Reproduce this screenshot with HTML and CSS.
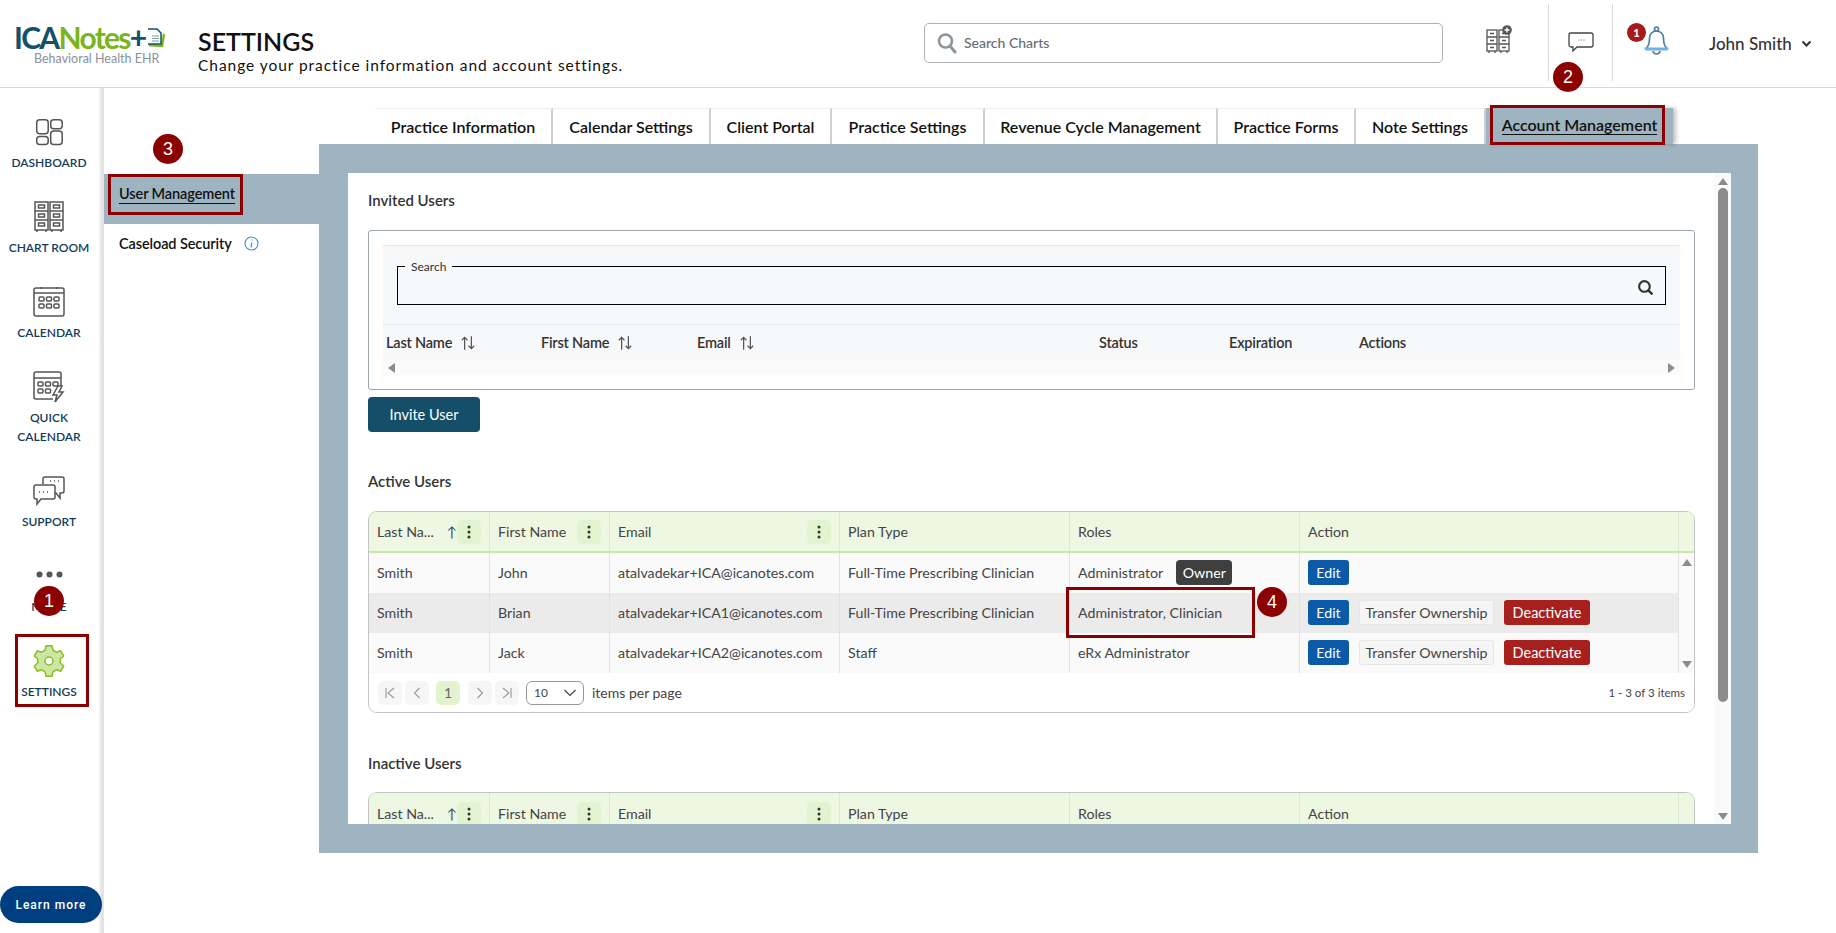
FILE: index.html
```html
<!DOCTYPE html>
<html lang="en">
<head>
<meta charset="utf-8">
<title>Settings</title>
<link rel="stylesheet" href="styles.css">
</head>
<body>
<div class="page">
  <header class="topbar">
    <div class="logo">
      <div class="logo-main"><span class="logo-ica">ICA</span><span class="logo-notes">Notes</span><span class="logo-ica">+</span>
        <svg class="logo-doc" width="19" height="19" viewBox="0 0 19 19"><path d="M3 17 L16 18 L18 6" fill="none" stroke="#7ab51d" stroke-width="2.400"/><path d="M2 1h9l4 4v11H2" fill="#fff" stroke="#14506a" stroke-width="1.500"/><path d="M6 8h7M6 10.500h7M6 13h7" stroke="#7d9aa8"/></svg>
      </div>
      <div class="logo-sub">Behavioral Health EHR</div>
    </div>
    <div class="page-title">
      <h1>SETTINGS</h1>
      <p>Change your practice information and account settings.</p>
    </div>
    <div class="charts-search">
      <svg width="20" height="22" viewBox="0 0 20 22"><circle cx="8.500" cy="9" r="6.500" fill="none" stroke="#8d949a" stroke-width="2.600"/><path d="M13 14l5 6" stroke="#8d949a" stroke-width="3" stroke-linecap="round"/></svg>
      <span>Search Charts</span>
    </div>
    <div class="top-icon chart-add">
      <svg width="27" height="29" viewBox="0 0 27 29"><g fill="none" stroke="#555" stroke-width="1.300"><rect x="1" y="5" width="10" height="21"/><rect x="13" y="5" width="10" height="21"/><path d="M1 12h10M1 19h10M13 12h10M13 19h10M4 8.500h4M4 15.500h4M4 22.500h4M16 8.500h4M16 15.500h4M16 22.500h4M3 26v2M9 26v2M15 26v2M21 26v2"/></g><circle cx="21" cy="5" r="4.800" fill="#555"/><path d="M18.500 5h5M21 2.500v5" stroke="#fff" stroke-width="1.300"/></svg>
    </div>
    <div class="top-icon chat">
      <svg width="26" height="21" viewBox="0 0 26 21"><path d="M3 1h20a2 2 0 0 1 2 2v10a2 2 0 0 1-2 2H9l-4 4v-4H3a2 2 0 0 1-2-2V3a2 2 0 0 1 2-2z" fill="#fff" stroke="#444" stroke-width="1.300"/><path d="M10.500 8h1M13 8h1M15.500 8h1" stroke="#666"/></svg>
    </div>
    <div class="top-icon bell">
      <svg width="29" height="29" viewBox="0 0 28 29"><g fill="none" stroke="#4d80a3" stroke-width="1.700"><path d="M4 22c3-3 3-6 3-10 0-4 3-7 7-7s7 3 7 7c0 4 0 7 3 10"/><circle cx="14" cy="3" r="2"/><path d="M10.500 25a3.500 3 0 0 0 7 0"/></g><path d="M1.500 21.500h25l-1.500 3H3z" fill="#6fb3e4"/></svg>
      <span class="bell-count">1</span>
    </div>
    <div class="user">John Smith
      <svg width="11" height="8" viewBox="0 0 11 8"><path d="M1.500 1.500l4 4 4-4" fill="none" stroke="#333" stroke-width="2"/></svg>
    </div>
  </header>

  <div class="body-row">
    <nav class="sidebar">
      <a class="nav-item">
        <svg class="nav-icon" width="32" height="32" viewBox="0 0 32 32"><g fill="none" stroke="#555" stroke-width="1.500"><rect x="3.700" y="3.700" width="11.500" height="14" rx="3"/><rect x="3.700" y="20.500" width="11.500" height="8" rx="3"/><rect x="17.700" y="3.700" width="11.500" height="9" rx="3"/><rect x="17.700" y="15" width="11.500" height="13.500" rx="3"/></g></svg>
        <span>DASHBOARD</span>
      </a>
      <a class="nav-item">
        <svg class="nav-icon" width="32" height="32" viewBox="0 0 32 32"><g fill="none" stroke="#555" stroke-width="1.500"><rect x="2" y="1" width="13" height="28"/><rect x="17" y="1" width="13" height="28"/><path d="M2 10h13M2 19h13M17 10h13M17 19h13M5.500 4h6v3h-6zM5.500 13h6v3h-6zM5.500 22h6v3h-6zM20.500 4h6v3h-6zM20.500 13h6v3h-6zM20.500 22h6v3h-6zM4 29v2M13 29v2M19 29v2M28 29v2"/></g></svg>
        <span>CHART ROOM</span>
      </a>
      <a class="nav-item">
        <svg class="nav-icon" width="32" height="32" viewBox="0 0 32 32"><g fill="none" stroke="#555" stroke-width="1.500"><rect x="1" y="2" width="30" height="28" rx="2"/><path d="M1 7h30"/><path d="M8 1v2M24 1v2"/><rect x="6" y="11" width="5" height="4" rx="1"/><rect x="13.500" y="11" width="5" height="4" rx="1"/><rect x="21" y="11" width="5" height="4" rx="1"/><rect x="6" y="18" width="5" height="4" rx="1"/><rect x="13.500" y="18" width="5" height="4" rx="1"/><rect x="21" y="18" width="5" height="4" rx="1"/></g></svg>
        <span>CALENDAR</span>
      </a>
      <a class="nav-item">
        <svg class="nav-icon" width="32" height="32" viewBox="0 0 32 32"><g fill="none" stroke="#555" stroke-width="1.500"><path d="M20 28H3a2 2 0 0 1-2-2V3a2 2 0 0 1 2-2h23a2 2 0 0 1 2 2v12"/><path d="M1 7h27"/><rect x="5" y="11" width="5" height="4" rx="1"/><rect x="12.500" y="11" width="5" height="4" rx="1"/><rect x="20" y="11" width="5" height="4" rx="1"/><rect x="5" y="18" width="5" height="4" rx="1"/><rect x="12.500" y="18" width="5" height="4" rx="1"/><path d="M25 15l-5 9h4l-2 7 8-10h-4l3-6z" fill="#fff"/></g></svg>
        <span>QUICK<br>CALENDAR</span>
      </a>
      <a class="nav-item">
        <svg class="nav-icon" width="32" height="32" viewBox="0 0 32 32"><g fill="none" stroke="#555" stroke-width="1.500"><path d="M10 9V4a2 2 0 0 1 2-2h17a2 2 0 0 1 2 2v12a2 2 0 0 1-2 2h-2v5l-4-5h-2"/><path d="M3 10h17a2 2 0 0 1 2 2v10a2 2 0 0 1-2 2H8l-4 5v-5H3a2 2 0 0 1-2-2V12a2 2 0 0 1 2-2z" fill="#fff"/><path d="M6 17h1M10 17h1M14 17h1M17 6h1M21 6h1M25 6h1"/></g></svg>
        <span>SUPPORT</span>
      </a>
      <a class="nav-item">
        <svg class="nav-icon" width="32" height="32" viewBox="0 0 32 32"><g fill="#555"><circle cx="6.500" cy="14.500" r="3"/><circle cx="16.500" cy="14.500" r="3"/><circle cx="26.500" cy="14.500" r="3"/></g></svg>
        <span>MORE</span>
      </a>
      <a class="nav-item">
        <svg class="nav-icon" width="32" height="32" viewBox="0 0 32 32"><path d="M13.040 .78L18.960 .78L19.930 5.190L23.390 7.190L27.700 5.830L30.660 10.950L27.330 14L27.330 18L30.660 21.050L27.700 26.170L23.390 24.810L19.930 26.810L18.960 31.220L13.040 31.220L12.070 26.810L8.610 24.810L4.300 26.170L1.340 21.050L4.670 18L4.670 14L1.340 10.950L4.300 5.830L8.610 7.190L12.070 5.190Z" fill="#cde6a5" stroke="#8ac01e" stroke-width="1.500" stroke-linejoin="round"/><circle cx="16" cy="16" r="4" fill="#fff" stroke="#8ac01e" stroke-width="1.500"/></svg>
        <span>SETTINGS</span>
      </a>
      <button class="learn-more">Learn more</button>
    </nav>

    <aside class="subnav">
      <a class="subnav-item is-active"><span>User Management</span></a>
      <a class="subnav-item"><span class="plain">Caseload Security</span>
        <svg class="info" width="15" height="15" viewBox="0 0 15 15"><circle cx="7.500" cy="7.500" r="6.500" fill="none" stroke="#3b8ee0" stroke-width="1.100"/><path d="M8 3.500v1M7.800 6.500L7 11.500" stroke="#3b8ee0" stroke-width="1.200"/></svg>
      </a>
    </aside>

    <main class="content">
      <div class="tabs">
        <a class="tab tab-1">Practice Information</a>
        <a class="tab tab-2">Calendar Settings</a>
        <a class="tab tab-3">Client Portal</a>
        <a class="tab tab-4">Practice Settings</a>
        <a class="tab tab-5">Revenue Cycle Management</a>
        <a class="tab tab-6">Practice Forms</a>
        <a class="tab tab-7">Note Settings</a>
        <a class="tab tab-8 is-active"><span>Account Management</span></a>
      </div>
      <div class="panel">
        <div class="sheet">
          <div class="sheet-scroll">
            <h2 class="section-title first">Invited Users</h2>
            <section class="invite-box">
              <div class="invite-inner">
                <div class="invite-search">
                  <fieldset>
                    <legend>Search</legend>
                    <svg width="17" height="17" viewBox="0 0 16 16"><circle cx="7" cy="7" r="5" fill="none" stroke="#333" stroke-width="2"/><path d="M10.500 10.500l4 4" stroke="#333" stroke-width="2.200"/></svg>
                  </fieldset>
                </div>
                <div class="invite-head">
                  <div>Last Name <svg class="sort" width="18" height="18" viewBox="0 0 16 16"><path d="M5 14V3M2.500 5.500L5 3l2.500 2.500M11 2v11M8.500 10.500L11 13l2.500-2.500" fill="none" stroke="#555" stroke-width="1.100"/></svg></div>
                  <div>First Name <svg class="sort" width="18" height="18" viewBox="0 0 16 16"><path d="M5 14V3M2.500 5.500L5 3l2.500 2.500M11 2v11M8.500 10.500L11 13l2.500-2.500" fill="none" stroke="#555" stroke-width="1.100"/></svg></div>
                  <div>Email <svg class="sort" width="18" height="18" viewBox="0 0 16 16"><path d="M5 14V3M2.500 5.500L5 3l2.500 2.500M11 2v11M8.500 10.500L11 13l2.500-2.500" fill="none" stroke="#555" stroke-width="1.100"/></svg></div>
                  <div>Status</div>
                  <div>Expiration</div>
                  <div>Actions</div>
                </div>
                <div class="h-scroll"><i class="arrow-left"></i><i class="arrow-right"></i></div>
              </div>
            </section>
            <button class="btn-invite">Invite User</button>

            <h2 class="section-title active">Active Users</h2>
            <section class="data-table">
              <div class="row head">
                <div class="cell"><span class="clip">Last Na...</span><b class="up">↑</b><i class="menu"><svg width="4" height="14" viewBox="0 0 4 14"><circle cx="2" cy="2" r="1.500"/><circle cx="2" cy="7" r="1.500"/><circle cx="2" cy="12" r="1.500"/></svg></i></div>
                <div class="cell">First Name<i class="menu"><svg width="4" height="14" viewBox="0 0 4 14"><circle cx="2" cy="2" r="1.500"/><circle cx="2" cy="7" r="1.500"/><circle cx="2" cy="12" r="1.500"/></svg></i></div>
                <div class="cell">Email<i class="menu"><svg width="4" height="14" viewBox="0 0 4 14"><circle cx="2" cy="2" r="1.500"/><circle cx="2" cy="7" r="1.500"/><circle cx="2" cy="12" r="1.500"/></svg></i></div>
                <div class="cell">Plan Type</div>
                <div class="cell">Roles</div>
                <div class="cell">Action</div>
                <div class="cell end"></div>
              </div>
              <div class="row">
                <div class="cell">Smith</div>
                <div class="cell">John</div>
                <div class="cell">atalvadekar+ICA@icanotes.com</div>
                <div class="cell">Full-Time Prescribing Clinician</div>
                <div class="cell">Administrator<span class="owner">Owner</span></div>
                <div class="cell"><button class="btn-edit">Edit</button></div>
                <div class="cell gutter"><i class="arrow-up"></i></div>
              </div>
              <div class="row hover">
                <div class="cell">Smith</div>
                <div class="cell">Brian</div>
                <div class="cell">atalvadekar+ICA1@icanotes.com</div>
                <div class="cell">Full-Time Prescribing Clinician</div>
                <div class="cell">Administrator, Clinician</div>
                <div class="cell"><button class="btn-edit">Edit</button><button class="btn-transfer">Transfer Ownership</button><button class="btn-deactivate">Deactivate</button></div>
                <div class="cell gutter"></div>
              </div>
              <div class="row">
                <div class="cell">Smith</div>
                <div class="cell">Jack</div>
                <div class="cell">atalvadekar+ICA2@icanotes.com</div>
                <div class="cell">Staff</div>
                <div class="cell">eRx Administrator</div>
                <div class="cell"><button class="btn-edit">Edit</button><button class="btn-transfer">Transfer Ownership</button><button class="btn-deactivate">Deactivate</button></div>
                <div class="cell gutter"><i class="arrow-down"></i></div>
              </div>
              <div class="pager">
                <span class="pg"><svg width="12" height="12" viewBox="0 0 12 12"><path d="M2 1v10M10 1L4 6l6 5" fill="none" stroke="#999" stroke-width="1.100"/></svg></span>
                <span class="pg"><svg width="12" height="12" viewBox="0 0 12 12"><path d="M8.500 1L3.500 6l5 5" fill="none" stroke="#999" stroke-width="1.100"/></svg></span>
                <span class="pg current">1</span>
                <span class="pg"><svg width="12" height="12" viewBox="0 0 12 12"><path d="M3.500 1l5 5-5 5" fill="none" stroke="#999" stroke-width="1.100"/></svg></span>
                <span class="pg"><svg width="12" height="12" viewBox="0 0 12 12"><path d="M10 1v10M2 1l6 5-6 5" fill="none" stroke="#999" stroke-width="1.100"/></svg></span>
                <span class="page-size">10<svg width="14" height="8" viewBox="0 0 14 8"><path d="M1.500 1l5.500 5.500L12.500 1" fill="none" stroke="#444" stroke-width="1.200"/></svg></span>
                <span class="per-page">items per page</span>
                <span class="count">1 - 3 of 3 items</span>
              </div>
            </section>

            <h2 class="section-title inactive">Inactive Users</h2>
            <section class="data-table clipped">
              <div class="row head">
                <div class="cell"><span class="clip">Last Na...</span><b class="up">↑</b><i class="menu"><svg width="4" height="14" viewBox="0 0 4 14"><circle cx="2" cy="2" r="1.500"/><circle cx="2" cy="7" r="1.500"/><circle cx="2" cy="12" r="1.500"/></svg></i></div>
                <div class="cell">First Name<i class="menu"><svg width="4" height="14" viewBox="0 0 4 14"><circle cx="2" cy="2" r="1.500"/><circle cx="2" cy="7" r="1.500"/><circle cx="2" cy="12" r="1.500"/></svg></i></div>
                <div class="cell">Email<i class="menu"><svg width="4" height="14" viewBox="0 0 4 14"><circle cx="2" cy="2" r="1.500"/><circle cx="2" cy="7" r="1.500"/><circle cx="2" cy="12" r="1.500"/></svg></i></div>
                <div class="cell">Plan Type</div>
                <div class="cell">Roles</div>
                <div class="cell">Action</div>
                <div class="cell end"></div>
              </div>
            </section>
          </div>
          <div class="v-scroll">
            <i class="arrow-up"></i>
            <div class="thumb"></div>
            <i class="arrow-down"></i>
          </div>
        </div>
      </div>
    </main>
  </div>

  <div class="mark box-settings"></div>
  <div class="mark box-tab"></div>
  <div class="mark box-user"></div>
  <div class="mark box-role"></div>
  <div class="step step-1">1</div>
  <div class="step step-2">2</div>
  <div class="step step-3">3</div>
  <div class="step step-4">4</div>
</div>
</body>
</html>
```

FILE: styles.css
```css
* { box-sizing: border-box; }
html, body { margin: 0; padding: 0; background: #fff; }
body { font-family: "Lato", "Liberation Sans", sans-serif; color: #333; overflow: hidden; }
h1, h2, p { margin: 0; }
i { font-style: normal; }
button { font-family: inherit; cursor: pointer; }

.page { position: relative; width: 1836px; height: 933px; display: flex; flex-direction: column; }

/* Top bar */
.topbar { height: 88px; flex: none; display: flex; align-items: flex-start; border-bottom: 1px solid #d9d9d9; }
.logo { width: 198px; flex: none; padding: 24px 0 0 14px; }
.logo-main { display: flex; align-items: flex-start; height: 27px; font-size: 30px; line-height: 27px; font-weight: 700; letter-spacing: -1.700px; }
.logo-ica { color: #14506a; }
.logo-notes { color: #7ab51d; }
.logo-doc { margin: 4px 0 0 0; }
.logo-sub { margin: 0 0 0 20px; font-size: 12.500px; line-height: 16px; color: #87929a; }
.page-title { width: 726px; flex: none; padding-top: 26px; }
.page-title h1 { font-size: 25px; line-height: 30px; font-weight: 600; color: #111; }
.page-title p { font-size: 15.500px; line-height: 18px; letter-spacing: 0.95px; color: #111; }
.charts-search { width: 519px; height: 40px; flex: none; margin-top: 23px; display: flex; align-items: center; gap: 7px; padding: 0 0 1px 12px; border: 1px solid #a9b0b6; border-radius: 5px; font-size: 14px; font-weight: 500; color: #666e75; }
.top-icon { flex: none; display: flex; }
.chart-add { margin: 25px 0 0 43px; }
.chat { margin-top: 4px; margin-left: 35px; height: 77px; width: 65px; border-left: 1px solid #dcdcdc; border-right: 1px solid #dcdcdc; padding: 28px 0 0 19px; }
.bell { position: relative; margin: 26px 0 0 29px; }
.bell-count { position: absolute; left: -15px; top: -3px; width: 19px; height: 19px; border-radius: 50%; background: #a61c1c; color: #fff; font-size: 11px; font-weight: 900; line-height: 19px; text-align: center; }
.user { margin: 34px 0 0 38px; display: flex; align-items: center; gap: 9px; font-size: 17px; line-height: 20px; color: #333; font-weight: 500; white-space: nowrap; }

.body-row { flex: 1; display: flex; min-height: 0; }

/* Left nav */
.sidebar { width: 104px; flex: none; display: flex; flex-direction: column; align-items: center; gap: 29px; padding-top: 28px; background: linear-gradient(to right, #fff 98px, #e2e2e2 102px, #dcdcdc 103px, #eee 104px); }
.nav-item { display: flex; flex-direction: column; align-items: center; width: 98px; margin-right: 6px; text-align: center; font-size: 12px; line-height: 19px; font-weight: 600; color: #123d5a; }
.nav-icon { display: block; margin-bottom: 5px; }
.learn-more { margin: auto 2px 10px 0; width: 102px; height: 37px; flex: none; border: 0; border-radius: 19px; background: #003f7f; color: #fff; font-family: "Roboto", "Liberation Sans", sans-serif; font-size: 12px; font-weight: 500; letter-spacing: 1px; }

/* Sub nav */
.subnav { width: 215px; flex: none; padding-top: 86px; }
.subnav-item { display: flex; align-items: center; height: 40px; padding: 0 0 2px 15px; font-size: 14.500px; font-weight: 600; color: #111; letter-spacing: -0.1px; }
.subnav-item.is-active { height: 50px; padding-bottom: 10px; background: #9fb4c1; }
.subnav-item.is-active span { line-height: 18px; border-bottom: 1px solid #111; }
.info { margin-left: 12px; }

/* Tabs + panel */
.content { flex: none; width: 1439px; padding-top: 20px; }
.tabs { display: flex; height: 36px; margin-left: 56px; }
.tab { display: flex; align-items: center; justify-content: center; height: 36px; background: #fff; border-top: 1px solid #eee; border-right: 2px solid #d0d0d0; font-size: 16px; font-weight: 600; color: #111; white-space: nowrap; }
.tab-1 { width: 178px; }
.tab-2 { width: 158px; }
.tab-3 { width: 121px; }
.tab-4 { width: 153px; }
.tab-5 { width: 233px; }
.tab-6 { width: 138px; }
.tab-7 { width: 130px; }
.tab-8 { width: 187px; }
.tab.is-active { background: #9fb4c1; border: 0; box-shadow: 3px 0 4px rgba(0,0,0,.25); padding-bottom: 1px; }
.tab.is-active span { border-bottom: 1px solid #111; line-height: 18px; }
.panel { height: 709px; padding: 29px 27px 29px 29px; background: #9fb4c1; }
.sheet { height: 651px; display: flex; background: #fff; overflow: hidden; }
.sheet-scroll { width: 1366px; flex: none; padding-left: 20px; overflow: hidden; }
.v-scroll { position: relative; width: 17px; flex: none; background: #fafafa; display: flex; flex-direction: column; align-items: center; padding-top: 5px; }
.v-scroll .thumb { width: 10px; height: 514px; margin-top: 3px; border-radius: 5px; background: #8c8c8c; }
.v-scroll .arrow-down { margin-top: auto; margin-bottom: 4px; }
.arrow-up, .arrow-down, .arrow-left, .arrow-right { display: block; width: 0; height: 0; border-style: solid; border-color: transparent; }
.arrow-up { border-width: 0 5px 7px; border-bottom-color: #8c8c8c; }
.arrow-down { border-width: 7px 5px 0; border-top-color: #8c8c8c; }
.arrow-left { border-width: 5px 7px 5px 0; border-right-color: #8c8c8c; }
.arrow-right { border-width: 5px 0 5px 7px; border-left-color: #8c8c8c; }

.section-title { font-size: 15px; line-height: 20px; font-weight: 600; color: #333; }
.section-title.first { margin: 17px 0 20px; }
.section-title.active { margin: 39px 0 20px; }
.section-title.inactive { margin: 40px 0 19px; }

/* Invited users */
.invite-box { width: 1327px; height: 160px; padding: 14px; border: 1px solid #9aa5ad; border-radius: 3px; }
.invite-inner { background: #f7f8fa; border-top: 1px solid #e5e7eb; }
.invite-search { height: 79px; padding: 13px 14px 0; border-bottom: 1px solid #e5e7eb; }
.invite-search fieldset { height: 46px; margin: 0; padding: 0 11px 0 0; display: flex; justify-content: flex-end; border: 1px solid #000; position: relative; }
.invite-search legend { margin-left: 7px; padding: 0 6px; font-size: 12px; line-height: 14px; color: #333; transform: translateY(1px); }
.invite-search fieldset svg { display: block; margin-top: 6px; }
.invite-head { display: grid; grid-template-columns: 155px 156px 402px 130px 130px 1fr; align-items: center; height: 35px; padding-left: 3px; font-size: 14.500px; font-weight: 600; color: #333; letter-spacing: -0.2px; }
.invite-head > div { display: flex; align-items: center; }
.sort { margin-left: 7px; }
.h-scroll { display: flex; align-items: center; justify-content: space-between; height: 15px; padding: 0 5px; background: #fbfbfb; }

.btn-invite { display: block; width: 112px; height: 35px; margin-top: 7px; border: 0; border-radius: 4px; background: #154e68; color: #fff; font-size: 14.500px; }

/* Data tables */
.data-table { width: 1327px; border: 1px solid #c4c4c4; border-radius: 9px; overflow: hidden; background: #fff; font-size: 14.200px; color: #444; }
.row { display: grid; grid-template-columns: 121px 120px 230px 230px 230px 379px 15px; height: 40px; background: #fafafa; }
.row.head { height: 41px; background: #edf7e2; border-bottom: 2px solid #c9e6ac; }
.row.hover { background: #ebebeb; }
.row.hover .gutter { background: #fafafa; }
.cell { display: flex; align-items: center; gap: 0; min-width: 0; padding: 0 0 2px 8px; border-right: 1px solid #e2e2e2; white-space: nowrap; }
.row.head .cell { padding-bottom: 0; border-right-color: #dbe9cc; }
.data-table.clipped .row.head .cell { padding-top: 2px; }
.cell.end, .cell.gutter { border-right: 0; padding: 0; justify-content: center; }
.gutter .arrow-up { margin-top: -22px; }
.gutter .arrow-down { margin-top: 22px; }
.clip { overflow: hidden; }
.up { margin-left: auto; font-weight: 400; font-size: 14px; }
.menu { margin-left: auto; margin-right: 8px; width: 24px; height: 24px; flex: none; display: flex; align-items: center; justify-content: center; border-radius: 5px; background: #e2f3d0; }
.menu svg { fill: #333; }
.up + .menu { margin-left: 0; }
.owner { margin-left: 13px; width: 56px; height: 25px; line-height: 25px; text-align: center; border-radius: 4px; background: #3f3f3f; color: #fff; }
.btn-edit, .btn-deactivate, .btn-transfer { height: 25px; padding: 0; font-size: 14.200px; border-radius: 3px; border: 0; }
.btn-edit { width: 41px; background: #0a5aa8; color: #fff; }
.btn-transfer { width: 135px; margin-left: 10px; background: #f5f5f5; border: 1px solid #e6e6e6; color: #444; }
.btn-deactivate { width: 86px; margin-left: 10px; background: #a8201e; color: #fff; font-size: 14.500px; }
.pager { display: flex; align-items: center; height: 39px; padding: 0 9px; background: #fff; }
.pg { width: 24px; height: 24px; margin-right: 3px; display: flex; align-items: center; justify-content: center; border-radius: 5px; background: #f6f6f6; color: #666; font-size: 14px; }
.pg.current { margin: 0 8px 0 4px; background: #e2f3d0; }
.page-size { width: 58px; height: 24px; margin-left: 4px; padding: 0 6px 0 7px; display: flex; align-items: center; justify-content: space-between; border: 1px solid #999; border-radius: 6px; font-size: 12px; }
.per-page { margin-left: 8px; font-size: 14px; }
.count { margin-left: auto; font-size: 11.500px; }
.data-table.clipped { border-bottom: 0; }

/* Walkthrough annotations, drawn over the page */
.mark { position: absolute; border: 3px solid #8b0000; }
.box-settings { left: 15px; top: 634px; width: 74px; height: 73px; }
.box-tab { left: 1490px; top: 105px; width: 175px; height: 40px; }
.box-user { left: 108px; top: 174px; width: 135px; height: 41px; }
.box-role { left: 1066px; top: 587px; width: 189px; height: 51px; }
.step { position: absolute; width: 30px; height: 30px; border-radius: 50%; background: #8b0000; color: #fff; font-family: "Liberation Sans", sans-serif; font-size: 18px; line-height: 30px; text-align: center; }
.step-1 { left: 34px; top: 586px; }
.step-2 { left: 1553px; top: 62px; }
.step-3 { left: 153px; top: 134px; }
.step-4 { left: 1257px; top: 587px; }
```
